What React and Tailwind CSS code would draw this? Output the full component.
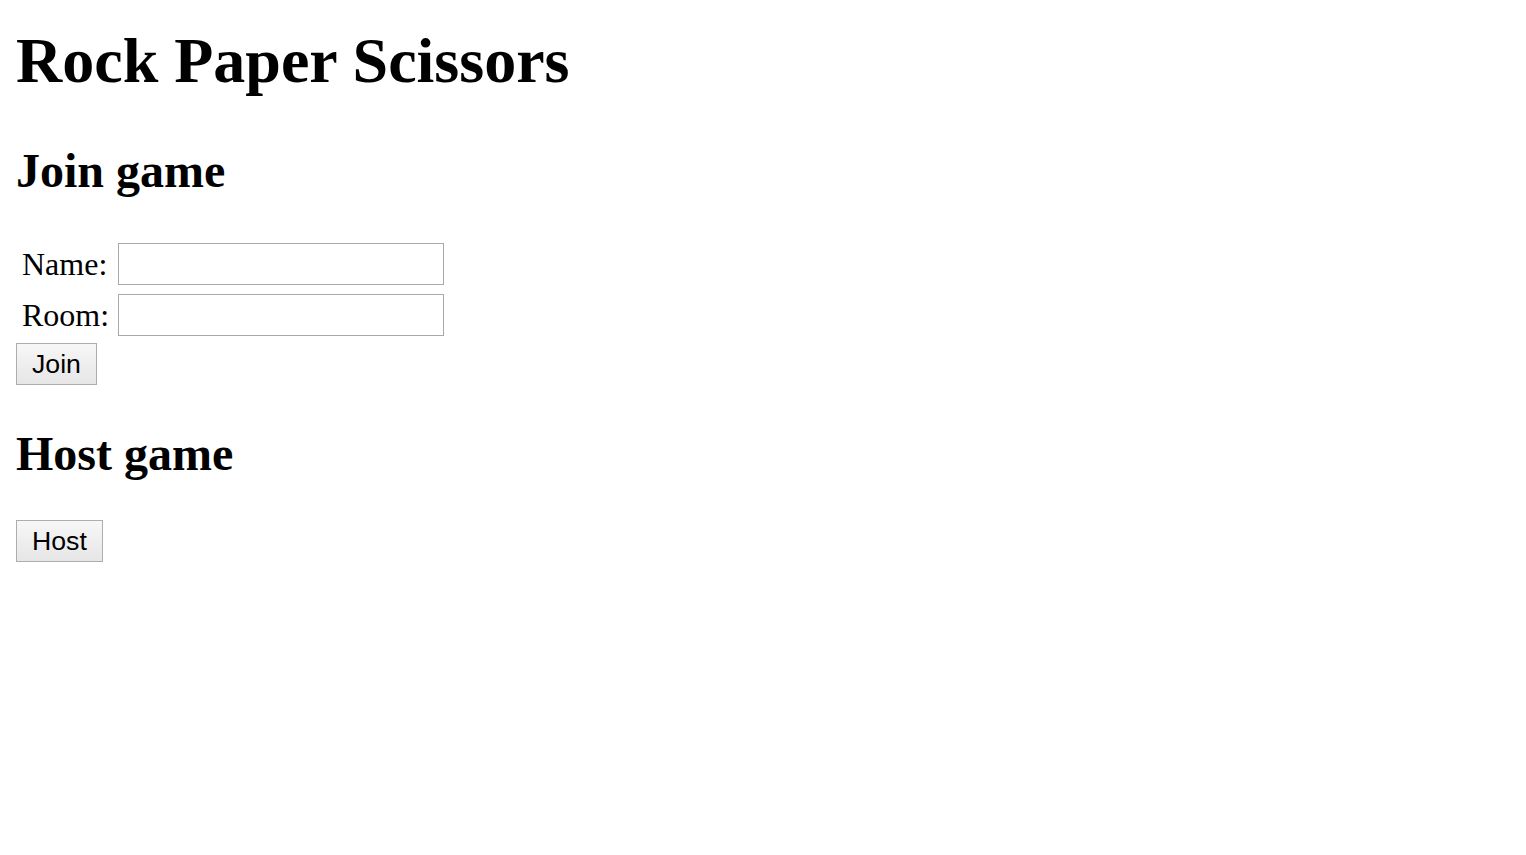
export default function App() {
  const btn =
    "h-[42px] px-[15px] flex items-center justify-center border border-[#adadad] bg-linear-to-b from-[#f7f7f7] to-[#e6e6e6] text-[26.67px] text-black font-['Liberation_Sans',Arial,sans-serif]";
  return (
    <div className="min-h-screen bg-white pl-[16px] pt-px text-black font-['Liberation_Serif','Times_New_Roman',serif]">
      <h1 className="mt-[28px] text-[64px] leading-[64px] font-bold">Rock Paper Scissors</h1>
      <h2 className="mt-[54px] text-[48px] leading-[48px] font-bold">Join game</h2>
      <div className="mt-[48px] flex flex-col">
        <div className="flex items-center h-[42px]">
          <label className="w-[102px] pl-[6px] text-[32px] leading-[32px]">Name:</label>
          <input type="text" className="w-[326px] h-[42px] border border-[#a9a9a9] bg-white outline-none" />
        </div>
        <div className="mt-[9px] flex items-center h-[42px]">
          <label className="w-[102px] pl-[6px] text-[32px] leading-[32px]">Room:</label>
          <input type="text" className="w-[326px] h-[42px] border border-[#a9a9a9] bg-white outline-none" />
        </div>
        <div className="mt-[7px] flex">
          <button className={btn}>Join</button>
        </div>
      </div>
      <h2 className="mt-[45px] text-[48px] leading-[48px] font-bold">Host game</h2>
      <div className="mt-[42px] flex">
        <button className={btn}>Host</button>
      </div>
    </div>
  );
}
